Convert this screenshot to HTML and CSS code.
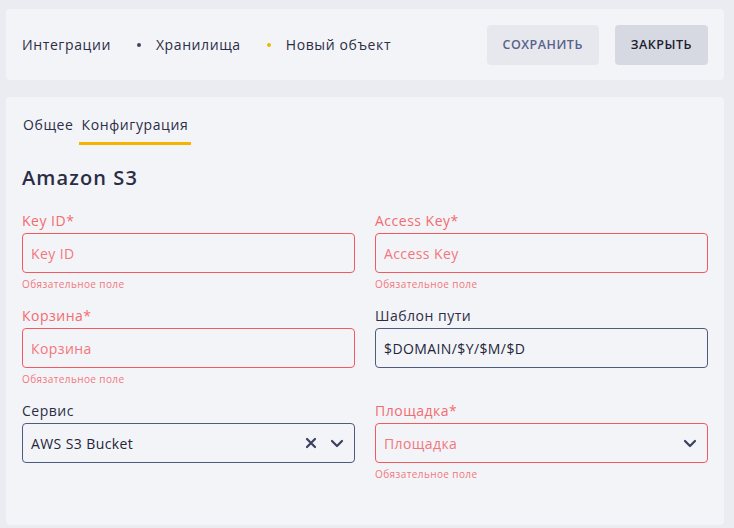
FILE: index.html
```html
<!DOCTYPE html>
<html lang="ru">
<head>
    <meta charset="UTF-8">
    <meta name="viewport" content="width=device-width, initial-scale=1.0">
    <title>Новый объект</title>
    <link rel="stylesheet" href="styles.css">
</head>
<body>
    <div class="page">
        <div class="card header">
            <div class="crumbs">
                <span class="crumb">Интеграции</span>
                <span class="sep"></span>
                <span class="crumb">Хранилища</span>
                <span class="sep sep-active"></span>
                <span class="crumb">Новый объект</span>
            </div>
            <div class="actions">
                <button class="btn btn-save">Сохранить</button>
                <button class="btn btn-close">Закрыть</button>
            </div>
        </div>

        <div class="card body-card">
            <div class="tabs">
                <div class="tab">Общее</div>
                <div class="tab tab-active">Конфигурация</div>
            </div>

            <h2 class="title">Amazon S3</h2>

            <div class="form">
                <div class="field invalid">
                    <label class="label">Key ID*</label>
                    <div class="input"><span class="placeholder">Key ID</span></div>
                    <div class="error">Обязательное поле</div>
                </div>
                <div class="field invalid">
                    <label class="label">Access Key*</label>
                    <div class="input"><span class="placeholder">Access Key</span></div>
                    <div class="error">Обязательное поле</div>
                </div>
                <div class="field invalid">
                    <label class="label">Корзина*</label>
                    <div class="input"><span class="placeholder">Корзина</span></div>
                    <div class="error">Обязательное поле</div>
                </div>
                <div class="field">
                    <label class="label">Шаблон пути</label>
                    <div class="input"><span class="value">$DOMAIN/$Y/$M/$D</span></div>
                </div>
                <div class="field">
                    <label class="label">Сервис</label>
                    <div class="input select">
                        <span class="value">AWS S3 Bucket</span>
                        <span class="icons">
                            <svg class="icon" width="12" height="12" viewBox="0 0 12 12"><path d="M2 2 L10 10 M10 2 L2 10" stroke="#3a4060" stroke-width="2.2" stroke-linecap="round"/></svg>
                            <svg class="icon" width="14" height="12" viewBox="0 0 14 12"><path d="M2 4 L7 9 L12 4" fill="none" stroke="#3a4060" stroke-width="2.2" stroke-linecap="round" stroke-linejoin="round"/></svg>
                        </span>
                    </div>
                </div>
                <div class="field invalid">
                    <label class="label">Площадка*</label>
                    <div class="input select">
                        <span class="placeholder">Площадка</span>
                        <span class="icons">
                            <svg class="icon" width="14" height="12" viewBox="0 0 14 12"><path d="M2 4 L7 9 L12 4" fill="none" stroke="#3a4060" stroke-width="2.2" stroke-linecap="round" stroke-linejoin="round"/></svg>
                        </span>
                    </div>
                    <div class="error">Обязательное поле</div>
                </div>
            </div>
        </div>
    </div>
</body>
</html>
```

FILE: styles.css
```css
* {
    box-sizing: border-box;
}

body {
    margin: 0;
    background: #ebecf1;
    font-family: "Open Sans", "Noto Sans", sans-serif;
    color: #2b2e45;
}

.page {
    padding: 9px 10px 5px 6px;
}

.card {
    background: #f3f4f8;
    border-radius: 4px;
}

.header {
    display: flex;
    justify-content: space-between;
    align-items: center;
    padding: 16px 16px;
    height: 71px;
}

.crumbs {
    display: flex;
    align-items: center;
    font-size: 14px;
    letter-spacing: 0.6px;
}

.sep {
    width: 4px;
    height: 4px;
    border-radius: 50%;
    background: #3d4463;
    margin: 0 15px 0 26px;
}

.sep-active {
    background: #f5b400;
}

.actions {
    display: flex;
    gap: 16px;
}

.btn {
    height: 40px;
    border: none;
    border-radius: 4px;
    padding: 0 16px;
    font-family: inherit;
    font-size: 12.5px;
    font-weight: 600;
    letter-spacing: 0.5px;
    text-transform: uppercase;
    cursor: pointer;
}

.btn-save {
    background: #e6e8ee;
    color: #58628a;
}

.btn-close {
    background: #d6d9e2;
    color: #1c1d2e;
}

.body-card {
    margin-top: 17px;
    padding: 18px 16px 44px;
}

.tabs {
    display: flex;
    gap: 2px;
    margin-left: -2px;
}

.tab {
    font-size: 14px;
    line-height: 20px;
    letter-spacing: 0.6px;
    padding: 0 3px 7px;
    color: #2b2e45;
    border-bottom: 3px solid transparent;
}

.tab-active {
    border-bottom-color: #f5b400;
}

.title {
    margin: 21px 0 21px;
    font-size: 20px;
    line-height: 24px;
    font-weight: 600;
    letter-spacing: 1.1px;
    color: #2a2d45;
}

.form {
    display: grid;
    grid-template-columns: 1fr 1fr;
    column-gap: 20px;
    row-gap: 15px;
}

.label {
    display: block;
    font-size: 14px;
    line-height: 20px;
    letter-spacing: 0.5px;
    margin-bottom: 2px;
    color: #2b2e45;
}

.input {
    display: flex;
    align-items: center;
    height: 40px;
    padding: 0 8px;
    border: 1px solid #4e5a7e;
    border-radius: 4px;
    font-size: 14px;
    letter-spacing: 0.4px;
}

.value {
    color: #24253a;
}

.placeholder {
    color: #f2777d;
}

.select {
    justify-content: space-between;
}

.icons {
    display: flex;
    align-items: center;
    gap: 13px;
    padding-right: 2px;
}

.icon {
    display: block;
}

.error {
    margin-top: 4px;
    font-size: 10px;
    line-height: 14px;
    letter-spacing: 0.4px;
    color: #f2777d;
}

.invalid .label {
    color: #f26b70;
}

.invalid .input {
    border-color: #f25a5f;
}
```
